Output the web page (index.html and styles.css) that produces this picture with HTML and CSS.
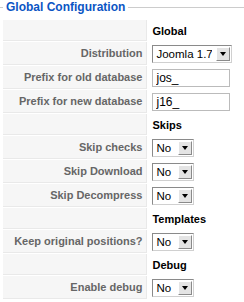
FILE: index.html
```html
<!DOCTYPE html>
<html>
  <head>
    <meta charset="utf-8" />
    <title>Global Configuration</title>
    <link rel="stylesheet" href="styles.css">
  </head>

  <body>
    <fieldset class="config">
      <legend>Global Configuration</legend>
      <table class="admintable">
        <tr class="head">
          <td class="key"></td>
          <td class="value"><strong>Global</strong></td>
        </tr>
        <tr>
          <td class="key">Distribution</td>
          <td class="value">
            <span class="select wide"><select><option>Joomla 1.7</option></select><span class="btn"></span></span>
          </td>
        </tr>
        <tr>
          <td class="key">Prefix for old database</td>
          <td class="value"><input type="text" value="jos_" /></td>
        </tr>
        <tr>
          <td class="key">Prefix for new database</td>
          <td class="value"><input type="text" value="j16_" /></td>
        </tr>

        <tr class="head">
          <td class="key"></td>
          <td class="value"><strong>Skips</strong></td>
        </tr>
        <tr>
          <td class="key">Skip checks</td>
          <td class="value">
            <span class="select"><select><option>No</option></select><span class="btn"></span></span>
          </td>
        </tr>
        <tr>
          <td class="key">Skip Download</td>
          <td class="value">
            <span class="select"><select><option>No</option></select><span class="btn"></span></span>
          </td>
        </tr>
        <tr>
          <td class="key">Skip Decompress</td>
          <td class="value">
            <span class="select"><select><option>No</option></select><span class="btn"></span></span>
          </td>
        </tr>

        <tr class="head">
          <td class="key"></td>
          <td class="value"><strong>Templates</strong></td>
        </tr>
        <tr>
          <td class="key">Keep original positions?</td>
          <td class="value">
            <span class="select"><select><option>No</option></select><span class="btn"></span></span>
          </td>
        </tr>

        <tr class="head">
          <td class="key"></td>
          <td class="value"><strong>Debug</strong></td>
        </tr>
        <tr>
          <td class="key">Enable debug</td>
          <td class="value">
            <span class="select"><select><option>No</option></select><span class="btn"></span></span>
          </td>
        </tr>
      </table>
    </fieldset>
  </body>
</html>
```

FILE: styles.css
```css
/* ------------------------------ reset ------------------------------ */
* {
  margin: 0;
  padding: 0;
  box-sizing: border-box;
}
body {
  font-family: "Liberation Sans", Arial, sans-serif;
  font-size: 11px;
  background: #fff;
  overflow: hidden;
}

/* ------------------------------ fieldset ------------------------------ */
fieldset.config {
  border: 0;
  border-top: 1px solid #ccc;
  padding: 5px 0 0 3px;
  min-width: 0;
}
fieldset.config legend {
  padding: 0 3px;
  font-size: 12px;
  line-height: 14px;
  font-weight: bold;
  color: #0b55c4;
}

/* ------------------------------ table ------------------------------ */
table.admintable {
  border-spacing: 1px;
  margin-left: -1px;
}
table.admintable td {
  height: 23px;
  padding: 0 4px;
  vertical-align: middle;
}
table.admintable tr.head td {
  height: 21px;
}
table.admintable td.key {
  width: 145px;
  background: #f6f6f6;
  text-align: right;
  color: #666;
  font-weight: bold;
  border-bottom: 1px solid #e9e9e9;
  border-right: 1px solid #e9e9e9;
  white-space: nowrap;
}
table.admintable td.value {
  width: 95px;
  color: #000;
}

/* ------------------------------ fields ------------------------------ */
.value input {
  display: block;
  width: 78px;
  height: 18px;
  border: 1px solid #bbb;
  padding: 0 3px;
  font-family: "Liberation Sans", Arial, sans-serif;
  font-size: 12px;
  color: #000;
  outline: 0;
}
.select {
  display: flex;
  width: 42px;
  height: 18px;
  border: 1px solid;
  border-color: #8a8a8a #d0d0d0 #d0d0d0 #8a8a8a;
  background: #fff;
}
.select.wide {
  width: 80px;
}
.select select {
  appearance: none;
  -webkit-appearance: none;
  flex: 1;
  min-width: 0;
  border: 0;
  outline: 0;
  background: transparent;
  padding: 0 3px;
  font-family: "Liberation Sans", Arial, sans-serif;
  font-size: 11.5px;
  color: #000;
}
.select .btn {
  display: flex;
  align-items: center;
  justify-content: center;
  width: 14px;
  margin: 1px;
  background: #e4e4e4;
  border: 1px solid;
  border-color: #fff #8a8a8a #8a8a8a #fff;
}
.select .btn::after {
  content: "";
  border-left: 3px solid transparent;
  border-right: 3px solid transparent;
  border-top: 4px solid #000;
}
```
